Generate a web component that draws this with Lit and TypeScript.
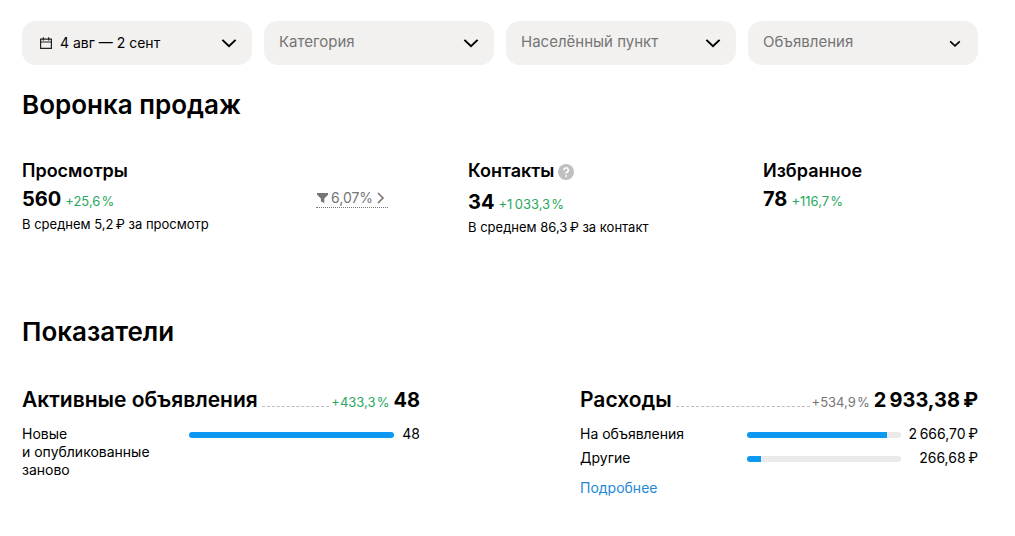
import { LitElement, html, css, svg, nothing } from "lit";
import { customElement } from "lit/decorators.js";

const THIN = "\u2009";
const HAIR = "\u200a";

const chevron = (small = false) => html`
  <svg class="chevron" viewBox="0 0 16 16" width="16" height="16" aria-hidden="true">
    ${small
      ? svg`<path d="M3.2 6.4 8 10.9l4.8-4.5" fill="none" stroke="#000" stroke-width="1.6" />`
      : svg`<path d="M1.4 4.9 8 11.2l6.6-6.3" fill="none" stroke="#000" stroke-width="2" />`}
  </svg>
`;

interface Row {
  label: string;
  value: string;
  share: number;
}

@customElement("filter-bar")
class FilterBar extends LitElement {
  static styles = css`
    :host {
      display: block;
    }
    .bar {
      display: grid;
      grid-template-columns: repeat(4, 1fr);
      gap: 12px;
    }
    .field {
      display: grid;
      grid-template-columns: 1fr;
      align-items: center;
      height: 44px;
      border-radius: 14px;
      background: #f2f1f0;
    }
    .control {
      grid-area: 1 / 1;
      box-sizing: border-box;
      width: 100%;
      height: 44px;
      margin: 0;
      padding: 0 40px 2px 15px;
      border: 0;
      border-radius: 14px;
      background: none;
      color: #757575;
      font: 400 15px/20px Inter, "Open Sans", sans-serif;
      text-align: left;
      appearance: none;
      cursor: pointer;
    }
    .date {
      display: flex;
      align-items: center;
      gap: 8px;
      padding: 0 40px 0 18px;
      color: #000;
      font-size: 14px;
    }
    .chevron {
      grid-area: 1 / 1;
      justify-self: end;
      margin-right: 15px;
      pointer-events: none;
    }
  `;

  render() {
    return html`
      <form class="bar">
        <div class="field">
          <button class="control date" type="button">
            <svg viewBox="0 0 12 12" width="12" height="12" aria-hidden="true">
              <path d="M.6 2.1h10.8v9.2H.6zM.6 5h10.8M3.4.2v3.2M8.6.2v3.2" fill="none" stroke="#222" stroke-width="1.2" />
            </svg>
            <span>4 авг — 2 сент</span>
          </button>
          ${chevron()}
        </div>
        ${["Категория", "Населённый пункт", "Объявления"].map(
          (name, i) => html`
            <div class="field">
              <select class="control" aria-label=${name}>
                <option>${name}</option>
              </select>
              ${chevron(i === 2)}
            </div>
          `
        )}
      </form>
    `;
  }
}

@customElement("funnel-step")
class FunnelStep extends LitElement {
  static properties = {
    name: {},
    value: {},
    delta: {},
    note: {},
    hint: { type: Boolean },
  };
  declare name: string;
  declare value: string;
  declare delta: string;
  declare note: string;
  declare hint: boolean;

  static styles = css`
    :host {
      display: block;
    }
    .title {
      display: flex;
      align-items: flex-start;
      gap: 4px;
      margin: 0 0 2px;
      font-size: 18px;
      line-height: 24px;
      font-weight: 600;
    }
    .help {
      width: 16px;
      height: 16px;
      margin: 5px 0 6px;
      padding: 0;
      border: 0;
      background: none;
      cursor: pointer;
    }
    .help svg {
      display: block;
    }
    .figures {
      display: flex;
      align-items: baseline;
      gap: 4px;
      line-height: 28px;
    }
    .value {
      font-size: 20px;
      font-weight: 700;
    }
    .delta {
      font-size: 13px;
      color: #28a75d;
    }
    .note {
      margin: 0;
      font-size: 13px;
      line-height: 18px;
    }
  `;

  render() {
    return html`
      <h3 class="title">
        ${this.name}
        ${this.hint
          ? html`<button class="help" type="button" aria-label="Подсказка">
              <svg viewBox="0 0 16 16" width="16" height="16" aria-hidden="true">
                <circle cx="8" cy="8" r="8" fill="#c0c0c0" />
                <path d="M5.7 6.2a2.3 2.2 0 1 1 3.5 1.8c-.8.5-1.2.8-1.2 1.7" fill="none" stroke="#fff" stroke-width="1.6" />
                <circle cx="8" cy="12" r="1" fill="#fff" />
              </svg>
            </button>`
          : nothing}
      </h3>
      <div class="figures">
        <span class="value">${this.value}</span>
        <span class="delta">${this.delta}</span>
      </div>
      ${this.note ? html`<p class="note">${this.note}</p>` : nothing}
    `;
  }
}

@customElement("metric-card")
class MetricCard extends LitElement {
  static properties = {
    name: {},
    value: {},
    delta: {},
    muted: { type: Boolean },
    rows: { attribute: false },
  };
  declare name: string;
  declare value: string;
  declare delta: string;
  declare muted: boolean;
  declare rows: Row[];

  static styles = css`
    :host {
      display: block;
    }
    .head {
      display: flex;
      align-items: baseline;
      line-height: 28px;
    }
    .title {
      margin: 0;
      font-size: 21px;
      font-weight: 600;
    }
    .leader {
      flex: 1;
      margin: 0 2px 0 4px;
      border-bottom: 1px dashed #bdbdbd;
    }
    .delta {
      margin-right: 4px;
      font-size: 13px;
      color: #28a75d;
    }
    .delta.muted {
      color: #757575;
    }
    .value {
      font-size: 20px;
      font-weight: 700;
    }
    .rows {
      display: grid;
      grid-template-columns: 42% 1fr auto;
      gap: 6px 0;
      margin-top: 9px;
      font-size: 14px;
      line-height: 18px;
    }
    .label {
      white-space: pre-line;
    }
    .track {
      height: 6px;
      margin-top: 7px;
      border-radius: 3px;
      background: #eaeaea;
      overflow: hidden;
    }
    .fill {
      height: 6px;
      background: #0d99f2;
    }
    .amount {
      padding-left: 8px;
      text-align: right;
    }
  `;

  render() {
    return html`
      <div class="head">
        <h3 class="title">${this.name}</h3>
        <span class="leader"></span>
        <span class="delta ${this.muted ? "muted" : ""}">${this.delta}</span>
        <span class="value">${this.value}</span>
      </div>
      <div class="rows">
        ${this.rows.map(
          (r) => html`
            <span class="label">${r.label}</span>
            <div class="track"><div class="fill" style="width:${r.share}%"></div></div>
            <span class="amount">${r.value}</span>
          `
        )}
      </div>
      <slot></slot>
    `;
  }
}

@customElement("app-root")
class AppRoot extends LitElement {
  static styles = css`
    :host {
      display: block;
      padding: 21px 37px 37px 22px;
      background: #fff;
      color: #000;
      font-family: Inter, "Open Sans", sans-serif;
    }
    .heading {
      margin: 0;
      font-size: 26px;
      line-height: 32px;
      font-weight: 600;
    }
    .funnel {
      margin-top: 24px;
    }
    .steps {
      display: grid;
      grid-template-columns: 294fr 152fr 295fr 215fr;
      align-items: start;
      margin-top: 38px;
    }
    .conversion {
      display: flex;
      align-items: center;
      gap: 2px;
      justify-self: start;
      margin-top: 29px;
      border-bottom: 1px dotted #757575;
      color: #757575;
      font-size: 14px;
      line-height: 19px;
      text-decoration: none;
    }
    .metrics {
      margin-top: 80px;
    }
    .cards {
      display: grid;
      grid-template-columns: 1fr 1fr;
      gap: 160px;
      margin-top: 38px;
    }
    .more {
      display: inline-block;
      margin-top: 12px;
      color: #1e88d8;
      font-size: 14px;
      line-height: 18px;
      text-decoration: none;
    }
  `;

  render() {
    return html`
      <filter-bar></filter-bar>
      <section class="funnel">
        <h2 class="heading">Воронка продаж</h2>
        <div class="steps">
          <funnel-step
            name="Просмотры"
            value="560"
            delta="+25,6${HAIR}%"
            note="В среднем 5,2${THIN}₽ за просмотр"
          ></funnel-step>
          <a class="conversion" href="#">
            <svg viewBox="0 0 13 12" width="13" height="12" aria-hidden="true">
              <path d="M1 1h11v1.8L8.3 6.6V11L4.9 9.6v-3L1 2.8z" fill="#757575" />
            </svg>
            <span>6,07%</span>
            <svg viewBox="0 0 13 12" width="13" height="12" aria-hidden="true">
              <path d="m3 1 5 5-5 5" fill="none" stroke="#757575" stroke-width="1.6" />
            </svg>
          </a>
          <funnel-step
            name="Контакты"
            value="34"
            delta="+1${THIN}033,3${HAIR}%"
            note="В среднем 86,3${THIN}₽ за контакт"
            hint
          ></funnel-step>
          <funnel-step name="Избранное" value="78" delta="+116,7${HAIR}%"></funnel-step>
        </div>
      </section>
      <section class="metrics">
        <h2 class="heading">Показатели</h2>
        <div class="cards">
          <metric-card
            name="Активные объявления"
            value="48"
            delta="+433,3${HAIR}%"
            .rows=${[{ label: "Новые\nи опубликованные\nзаново", value: "48", share: 100 }]}
          ></metric-card>
          <metric-card
            name="Расходы"
            value="2${THIN}933,38${THIN}₽"
            delta="+534,9${HAIR}%"
            muted
            .rows=${[
              { label: "На объявления", value: `2${THIN}666,70${THIN}₽`, share: 91 },
              { label: "Другие", value: `266,68${THIN}₽`, share: 9 },
            ]}
          >
            <a class="more" href="#">Подробнее</a>
          </metric-card>
        </div>
      </section>
    `;
  }
}
